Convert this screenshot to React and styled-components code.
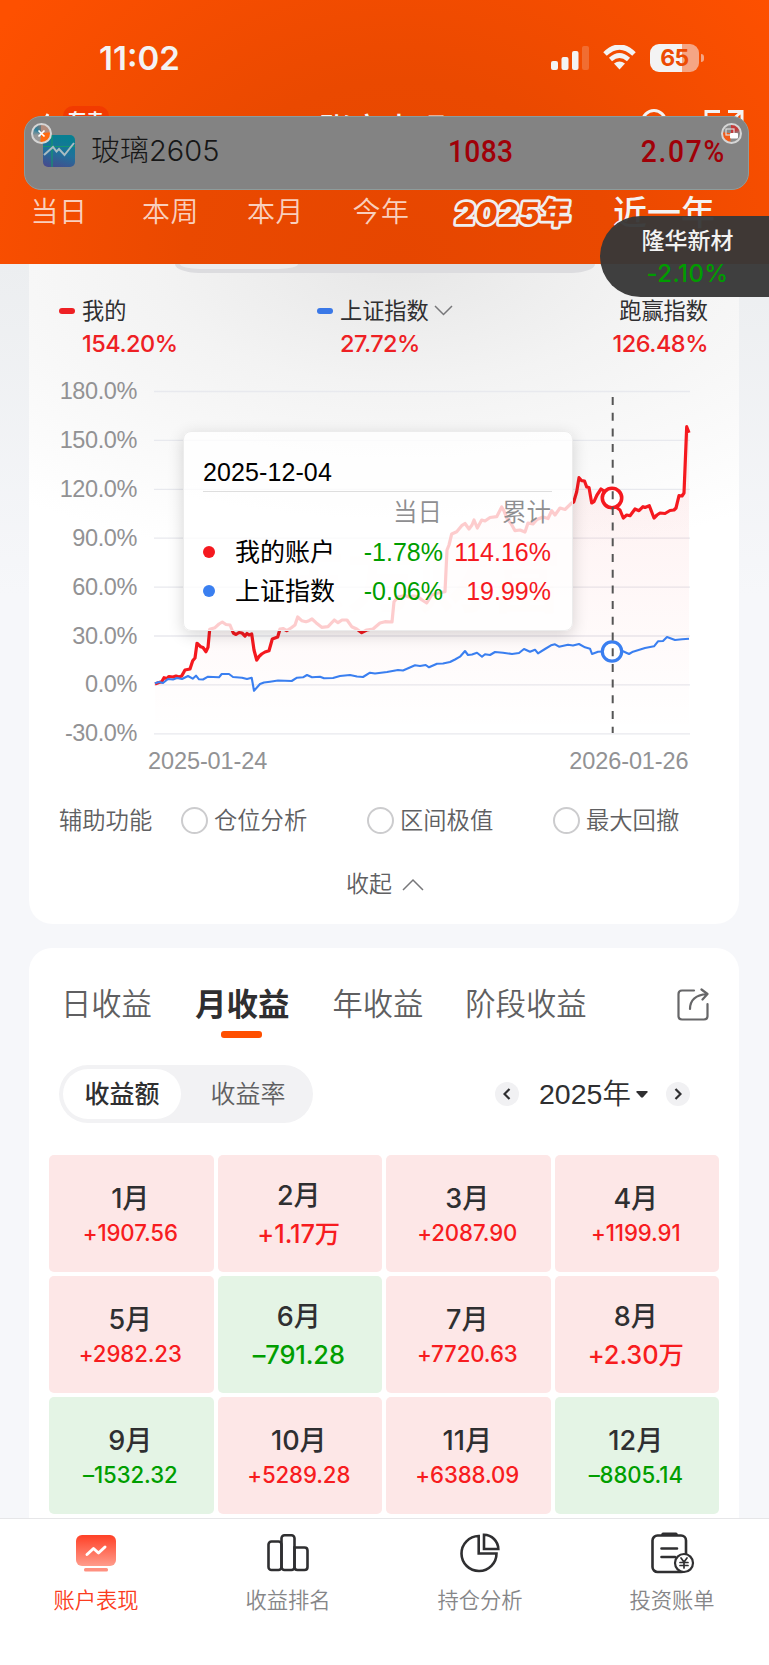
import React, { useState } from "react"
import styled, { createGlobalStyle } from "styled-components"

const GlobalStyle = createGlobalStyle`
    * {
        box-sizing: border-box;
    }
    body {
        margin: 0;
        background: #f6f7fa;
        font-family: Inter, "Noto Sans CJK SC", sans-serif;
        color: #2f2f31;
    }
    button {
        font: inherit;
        color: inherit;
        border: 0;
        padding: 0;
        background: none;
    }
    svg {
        display: block;
    }
`

const Page = styled.div`
    position: relative;
    width: 769px;
    height: 1665px;
    display: flex;
    flex-direction: column;
    overflow: hidden;
`

/* ---------- header ---------- */

const Header = styled.header`
    position: relative;
    flex: none;
    height: 264px;
    overflow: hidden;
    background: radial-gradient(ellipse 390px 330px at 400px 262px, #e64600 0%, #ea4900 55%, #fe5000 125%);
    color: #f3f3f3;
`

const StatusBar = styled.div`
    height: 106px;
    padding: 40px 70px 0 99px;
    display: flex;
    justify-content: space-between;
`

const Time = styled.div`
    font-size: 33px;
    line-height: 36px;
    font-weight: 600;
`

const StatusIcons = styled.div`
    display: flex;
    height: 35px;
    align-items: center;
    gap: 14px;
`

const Battery = styled.div`
    position: relative;
    width: 49px;
    height: 28px;
    border-radius: 9px;
    background: linear-gradient(90deg, #f3f3f3 66%, #f5a584 66%);
    color: #ec4b02;
    font-size: 23px;
    line-height: 28px;
    font-weight: 700;
    text-align: center;
    letter-spacing: -.5px;
    &::after {
        content: "";
        position: absolute;
        right: -5px;
        top: 10px;
        width: 3px;
        height: 8px;
        border-radius: 0 4px 4px 0;
        background: #f5a584;
    }
`

const TitleBar = styled.div`
    height: 80px;
    display: grid;
    grid-template-columns: 120px 1fr 120px;
    padding: 0 25px 0 40px;
    justify-items: center;
`

const TitleLeft = styled.div`
    display: flex;
    gap: 13px;
    justify-self: start;
    svg {
        margin-top: 7px;
    }
`

const HotTag = styled.span`
    height: 26px;
    padding: 0 5px;
    border-radius: 10px;
    background: #f23a00;
    font-size: 18px;
    line-height: 30px;
    font-weight: 700;
`

const Title = styled.h1`
    margin: 4px 18px 0 0;
    font-size: 32px;
    line-height: 40px;
    font-weight: 500;
`

const TitleRight = styled.div`
    display: flex;
    gap: 33px;
    justify-self: end;
    svg {
        margin-top: 3px;
    }
`

const RangeTabs = styled.nav`
    height: 78px;
    margin-top: 5px;
    display: flex;
    padding-left: 3px;
`

const RangeTab = styled.button`
    flex: none;
    width: ${p => p.$width}px;
    height: 42px;
    font-size: ${p => p.$large ? 34 : 28}px;
    line-height: ${p => p.$large ? 29 : 43}px;
    letter-spacing: ${p => p.$large ? 0 : 0.6}px;
    font-weight: ${p => p.$large ? 500 : 350};
    color: ${p => p.$large ? "#f3f3f3" : "#f9cfbd"};
    text-align: center;
`

/* ---------- floating quotes ---------- */

const QuoteBar = styled.div`
    position: absolute;
    left: 24px;
    top: 116px;
    width: 725px;
    height: 74px;
    padding: 0 24px 5px 18px;
    border: 1px solid #8d9c9c;
    border-radius: 17px;
    background: #838383;
    display: grid;
    grid-template-columns: 48px 1fr 74px 211px;
    align-items: center;
`

const QuoteName = styled.span`
    font-size: 29px;
    line-height: 40px;
    font-weight: 300;
    color: #171717;
    white-space: nowrap;
`

const QuoteNumber = styled.span`
    justify-self: end;
    font-family: Roboto, sans-serif;
    font-size: 32px;
    line-height: 40px;
    font-weight: 500;
    letter-spacing: ${p => p.$spacing}px;
    margin-right: -${p => p.$spacing}px;
    white-space: nowrap;
    transform: scaleX(.88);
    transform-origin: right;
    color: #a00008;
`

const Knob = styled.span`
    position: absolute;
    top: 6px;
    ${p => p.$side}: 6px;
    width: 21px;
    height: 21px;
    border: 2px solid #d5d5d5;
    border-radius: 50%;
    background: ${p => p.$side === "left"
        ? "conic-gradient(#b28c7d 0 20%, #ff6a10 25% 50%, #999 55% 70%, #2b7f9c 85%, #777 100%)"
        : "conic-gradient(#c23a3a 0 15%, #8a8a8a 25% 50%, #f25a17 55% 75%, #888 80% 100%)"};
`

const StockPill = styled.div`
    position: absolute;
    right: 0;
    top: 216px;
    width: 169px;
    height: 81px;
    padding: 9px 0 0 6px;
    border-radius: 41px 0 0 41px;
    background: rgba(55, 55, 55, .96);
    text-align: center;
    font-size: 23px;
    line-height: 33px;
    color: #f3f3f3;
    font-weight: 500;
`

const PillChange = styled.div`
    font-size: 24px;
    line-height: 32px;
    letter-spacing: .4px;
    font-weight: 500;
    color: #009c00;
`

/* ---------- cards ---------- */

const Content = styled.main`
    flex: 1;
    min-height: 0;
    overflow: hidden;
    padding: 0 30px 0 29px;
    background: linear-gradient(180deg, #eceef0 0, #f6f7fa 330px);
    display: flex;
    flex-direction: column;
    gap: 24px;
`

const Card = styled.section`
    flex: none;
    width: 710px;
    border-radius: 23px;
    background: #fff;
`

const ChartCard = styled(Card)`
    position: relative;
    height: 660px;
    border-radius: 0 0 23px 23px;
    background: radial-gradient(ellipse 620px 300px at 370px 0, #e7e7e7 0, #f3f3f3 40%, #fff 100%) #fff;
`

const ScopeTail = styled.div`
    width: 420px;
    height: 9px;
    margin-left: 146px;
    padding-left: 5px;
    border-radius: 0 0 24px 24px / 0 0 9px 9px;
    background: #dcdcdf;
    &::after {
        content: "";
        display: block;
        width: 118px;
        height: 5px;
        border-radius: 0 0 20px 20px / 0 0 5px 5px;
        background: #ececed;
    }
`

const Legend = styled.div`
    height: 98px;
    padding: 20px 31px 0 30px;
    display: grid;
    grid-template-columns: 258px 1fr auto;
`

const LegendItem = styled.div`
    padding-left: ${p => p.$color ? 23 : 0}px;
    text-align: ${p => p.$color ? "left" : "right"};
`

const LegendName = styled.div`
    position: relative;
    display: flex;
    align-items: center;
    justify-content: ${p => p.$color ? "flex-start" : "flex-end"};
    gap: 5px;
    font-size: 22.2px;
    line-height: 35px;
    &::before {
        content: "";
        display: ${p => p.$color ? "block" : "none"};
        width: 16px;
        height: 6px;
        margin: 1px 2px 0 -23px;
        border-radius: 3px;
        background: ${p => p.$color};
    }
`

const LegendValue = styled.div`
    font-size: 23.5px;
    line-height: 32px;
    letter-spacing: -.5px;
    font-weight: 450;
    color: #ee2024;
`

const Tooltip = styled.div`
    position: absolute;
    left: 154px;
    top: 167px;
    width: 390px;
    height: 200px;
    padding: 20px 20px 0 19px;
    border: 1px solid #ececec;
    border-radius: 8px;
    background: rgba(255, 255, 255, .78);
    box-shadow: 0 4px 16px rgba(0, 0, 0, .16);
    font-family: "Liberation Sans", "Noto Sans CJK SC", sans-serif;
    font-size: 25px;
    color: #000;
`

const TooltipDate = styled.div`
    height: 40px;
    line-height: 41px;
    letter-spacing: .1px;
    border-bottom: 1px solid #dedede;
`

const TooltipRow = styled.div`
    display: grid;
    grid-template-columns: 31px 102px 107px 108px;
    align-items: center;
    line-height: ${p => p.$head ? 42 : 37}px;
    height: ${p => p.$head ? 41 : 39}px;
    color: ${p => p.$head ? "#8e8e90" : "inherit"};
    font-weight: ${p => p.$head ? 350 : 400};
    font-size: ${p => p.$head ? 24.5 : 25}px;
`

const Dot = styled.i`
    width: 12px;
    height: 12px;
    margin-top: -2px;
    border-radius: 50%;
    background: ${p => p.$color};
`

const TooltipLabel = styled.span`
    padding-left: 1px;
    white-space: nowrap;
`

const TooltipValue = styled.span`
    text-align: right;
    white-space: nowrap;
    color: ${p => p.$up ? "#f5191f" : "#009e00"};
`

const TooltipHead = styled.span`
    text-align: right;
    padding-right: ${p => p.$pad || 0}px;
`

const Helpers = styled.div`
    height: 45px;
    margin-top: 23px;
    padding: 0 30px;
    display: flex;
    align-items: center;
    font-size: 23.3px;
    line-height: 34px;
    font-weight: 350;
    color: #606062;
`

const HelpersTitle = styled.span`
    flex: none;
    width: 123px;
`

const Radio = styled.label`
    flex: none;
    width: 186px;
    display: flex;
    align-items: center;
    gap: 8px;
    margin-left: -1px;
    margin-right: 1px;
    white-space: nowrap;
    &::before {
        content: "";
        flex: none;
        width: 23px;
        height: 23px;
        margin-right: -2px;
        border: 2px solid #ccccce;
        border-radius: 50%;
    }
`

const Collapse = styled.button`
    display: flex;
    align-items: center;
    gap: 10px;
    margin: 23px auto 0;
    padding-left: 2px;
    height: 36px;
    font-size: 23px;
    line-height: 34px;
    font-weight: 350;
    color: #606062;
`

const ProfitCard = styled(Card)`
    height: 700px;
`

const ProfitTabs = styled.div`
    height: 95px;
    padding: 34px 30px 0 32px;
    display: flex;
`

const ProfitTab = styled.button`
    position: relative;
    flex: none;
    height: 61px;
    margin-right: ${p => p.$gap}px;
    font-size: ${p => p.$active ? 31.5 : 30.3}px;
    line-height: 45px;
    display: flex;
    font-weight: ${p => p.$active ? 700 : 350};
    color: ${p => p.$active ? "#2f2f31" : "#5f5f61"};
    &::after {
        content: "";
        display: ${p => p.$active ? "block" : "none"};
        position: absolute;
        left: 50%;
        top: 49px;
        width: 41px;
        height: 7px;
        margin-left: -21px;
        border-radius: 3px;
        background: #ff4f00;
    }
`

const ShareButton = styled.button`
    margin: 6px 0 0 auto;
    align-self: flex-start;
`

const Filters = styled.div`
    height: 112px;
    padding: 22px 49px 0 30px;
    display: flex;
    justify-content: space-between;
`

const Segmented = styled.div`
    width: 254px;
    height: 58px;
    padding: 4px;
    display: flex;
    border-radius: 29px;
    background: #f2f2f4;
`

const Segment = styled.button`
    flex: none;
    width: ${p => p.$active ? 118 : 134}px;
    height: 50px;
    border-radius: 25px;
    font-size: 25px;
    line-height: 51px;
    background: ${p => p.$active ? "#fff" : "none"};
    font-weight: ${p => p.$active ? 500 : 350};
    color: ${p => p.$active ? "#2f2f31" : "#5f5f61"};
`

const YearPicker = styled.div`
    display: flex;
    align-items: center;
    height: 58px;
    font-family: "Liberation Sans", "Noto Sans CJK SC", sans-serif;
    font-size: 28.5px;
`

const RoundButton = styled.button`
    display: grid;
    place-items: center;
    width: 24px;
    height: 24px;
    border-radius: 50%;
    background: #f1f1f3;
`

const Year = styled.button`
    display: flex;
    align-items: center;
    gap: 5px;
    width: 109px;
    margin: 0 18px 0 20px;
    font-weight: 350;
    line-height: 40px;
    white-space: nowrap;
`

const Months = styled.div`
    padding: 0 20px;
    display: grid;
    grid-template-columns: repeat(4, 1fr);
    grid-auto-rows: 117px;
    gap: 4px;
`

const Month = styled.div`
    border-radius: 5px;
    padding: ${p => p.$big ? 23 : 26}px 2px 0 0;
    text-align: center;
    background: ${p => p.$down ? "#e4f4e5" : "#fde7e7"};
    color: ${p => p.$down ? "#009e00" : "#f71c20"};
`

const MonthName = styled.div`
    font-size: 27px;
    line-height: 36px;
    font-weight: 500;
    color: #2f2f31;
`

const MonthValue = styled.div`
    font-size: ${p => p.$big ? 25.4 : 22.2}px;
    line-height: ${p => p.$big ? 40 : 32}px;
    font-weight: ${p => p.$big ? 500 : 450};
    letter-spacing: -.1px;
`

/* ---------- bottom bar ---------- */

const BottomBar = styled.nav`
    flex: none;
    height: 147px;
    border-top: 1px solid #e6e6e8;
    background: #fff;
    display: grid;
    grid-template-columns: repeat(4, 1fr);
    padding-right: 1px;
`

const BottomItem = styled.button`
    display: flex;
    flex-direction: column;
    align-items: center;
    gap: 9px;
    padding-top: 14px;
    font-size: 21.3px;
    line-height: 36px;
    font-weight: 350;
    color: ${p => p.$active ? "#fb3c20" : "#868688"};
`

const redLine = "155,684 159,682.5 161.7,681.7 164,677.7 167,678.5 169,676.5 173,677 176,676 179,677 181.7,676 185,670 190,669 192.7,660.7 195,658 197,643.3 200.7,646.7 203,647.5 206,651.7 208,647.3 209.7,629.3 215,627.7 219,624 222.3,622 226,624.5 230,625 233.3,633 236,634.5 239,632.5 242,633 245,636 247,633.5 249,635 251.7,634 254,650 256.7,660 259,656.5 261.7,654 265,652 269,650.7 272.3,639 277.7,637 280,629 283,628.5 286.7,630.7 291,628 295,625 297.7,617 301.7,620.7 306,621.7 309,620.7 312,619 316,622.7 321.7,627.3 328,626.7 334.3,620 338,622.7 342,620 347,620 351.7,626.7 356.7,629 361.7,632.7 366.7,630 373,629 380,623 385,621.7 392,622 394,601.7 398,597 405,595.5 409,597 413,596 418,596.7 422,600 426.7,603 431.7,595 438,593 445,591.7 447,550 449,545 451.7,534 456.7,531.7 461.7,525.7 465,523.5 469,529 472,525 474,520 477.3,528 481.7,520 485,521 490,517.5 496.7,516.7 501.7,507 504,511 506.7,518 511,523.5 515,530.7 520,530 525,532 528,523 533,524 537,519.5 543,517 548,518.5 551.7,510.7 555,515 560,508 565,509.5 571.7,503 573.7,502 576.7,491.7 579,477.7 581.7,480.7 584.5,481 586.7,487 589,487.5 591.7,503 594,501.7 597,495 601,489 604,491 608,494 612.3,498 617.3,508 620,510 623.3,518 626.7,515 630,515.7 635,509 639,510.7 643,506.7 645,507.5 649.3,505.7 654,518 657,515 660,513 665,513.5 670,510.5 674,510 676,508 679,495.7 682,496 684,493 686.7,426.7 689,432.7"

const blueLine = "155,683.3 159,682 163,683 168,679 173,679.5 177,678 182,679 188,676 192.7,678.7 196,675.7 199,679.3 203,679.5 208,676.7 213,677 219,677.3 221.7,674 229,674 233,677 242,677.7 247,679 251.7,677.7 254,690.7 260,684 264,682.5 270,681.7 278,680.5 291.7,681 297,677.7 303,677.3 307,675 312,677.3 320,676.7 324,678.3 333,678 340,676 350,675 357,676.5 363,677 370,672.7 375,673.5 387,672 398,670 403,670.5 415,665.3 420,666 425.7,665 429,667.3 437,663.7 443,663.5 450,662 455,659.5 460,656.7 465,651 468,655 472,654.5 477,652.7 482,656.7 485,654.3 490,655 495,652 503,652.7 512,654 519,653 524,649 530,651.7 535,649.7 538,653.3 545,649 551,645.3 555,644.3 559,646.7 568,644.7 573,645.5 579,644 585,647.3 590,648.7 592,654 598,651.7 612,651 623,651.3 629,654 633,651.7 645,648 654,646.3 658,641.3 663,641 667,637 675,640 682,639.3 689,638.7"

const axis = ["180.0%", "150.0%", "120.0%", "90.0%", "60.0%", "30.0%", "0.0%", "-30.0%"]

const ranges = [
    { name: "当日", width: 112 },
    { name: "本周", width: 111 },
    { name: "本月", width: 99 },
    { name: "今年", width: 112 },
    { name: "2025年", width: 154, badge: true },
    { name: "近一年", width: 146, large: true }
]

const months = [
    ["1月", "+1907.56"],
    ["2月", "+1.17万", true],
    ["3月", "+2087.90"],
    ["4月", "+1199.91"],
    ["5月", "+2982.23"],
    ["6月", "–791.28", true],
    ["7月", "+7720.63"],
    ["8月", "+2.30万", true],
    ["9月", "–1532.32"],
    ["10月", "+5289.28"],
    ["11月", "+6388.09"],
    ["12月", "–8805.14"]
]

const Chart = () => <svg width="710" height="404" viewBox="29 371 710 404">
    <defs>
        <linearGradient id="area" x1="0" y1="0" x2="0" y2="1">
            <stop offset="0" stopColor="#f5191f" stopOpacity=".07" />
            <stop offset="1" stopColor="#f5191f" stopOpacity="0" />
        </linearGradient>
    </defs>
    {axis.map((label, i) => <g key={label}>
        <line x1="154" x2="690" y1={391.5 + i * 48.9} y2={391.5 + i * 48.9} stroke="#e8e9ee" strokeWidth="1.3" />
        <text
            x="137"
            y={399 + i * 48.9}
            textAnchor="end"
            fontFamily="Liberation Sans, sans-serif"
            fontSize="23.5"
            letterSpacing="-.4"
            fill="#929294"
        >{label}</text>
    </g>)}
    <text x="274" y="606" fontSize="72" fontWeight="700" fill="#ff5000" opacity=".025">东方财富</text>
    <polygon points={`155,733 ${redLine} 689,733`} fill="url(#area)" />
    <polyline points={redLine} fill="none" stroke="#f5191f" strokeWidth="3.2" strokeLinejoin="round" />
    <polyline points={blueLine} fill="none" stroke="#3a7ff0" strokeWidth="2.1" strokeLinejoin="round" />
    <circle cx="612" cy="498" r="9.7" fill="#fff" stroke="#f5191f" strokeWidth="3.6" />
    <circle cx="612" cy="651.5" r="9.7" fill="#fff" stroke="#3a7ff0" strokeWidth="3.2" />
    <line x1="612.7" x2="612.7" y1="397" y2="733" stroke="#555" strokeWidth="2" strokeDasharray="8 7.7" />
    <g fontFamily="Liberation Sans, sans-serif" fontSize="23.5" letterSpacing="-.1" fill="#929294">
        <text x="148" y="768.5">2025-01-24</text>
        <text x="688.5" y="768.5" textAnchor="end">2026-01-26</text>
    </g>
</svg>

const YearBadge = () => <svg width="154" height="42" viewBox="0 0 154 42">
    <text
        x="0"
        y="33"
        transform="translate(79) skewX(-6)"
        textAnchor="middle"
        fontSize="30"
        fontWeight="900"
        letterSpacing="1.2"
        fill="#ea4900"
        stroke="#efefef"
        strokeWidth="5.4"
        strokeLinejoin="round"
        paintOrder="stroke"
    >2025年</text>
</svg>

const SignalIcon = () => <svg width="38" height="24" viewBox="0 0 38 24" fill="#f3f3f3">
    <rect x="0" y="15" width="7" height="9" rx="2" />
    <rect x="10.5" y="11" width="7" height="13" rx="2" />
    <rect x="21" y="5" width="6.5" height="19" rx="2" />
    <rect x="31" y="0" width="7" height="24" rx="2" opacity=".2" />
</svg>

const WifiIcon = () => <svg width="33" height="25" viewBox="0 0 33 25" fill="none" stroke="#f3f3f3">
    <path d="M2 9 Q16.5 -5 31 9" strokeWidth="5" />
    <path d="M7.5 14.5 Q16.5 6.5 25.5 14.5" strokeWidth="4.6" />
    <path d="M11 18.5 Q16.5 14.5 22 18.5 L16.5 24.5Z" fill="#f3f3f3" stroke="none" />
</svg>

const QuoteIcon = () => <svg width="32" height="32" viewBox="0 0 32 32">
    <defs>
        <linearGradient id="quote" x1="0" y1="1" x2=".3" y2="0">
            <stop offset="0" stopColor="#4a478c" />
            <stop offset=".55" stopColor="#20719b" />
            <stop offset="1" stopColor="#087f92" />
        </linearGradient>
    </defs>
    <rect width="32" height="32" rx="5" fill="url(#quote)" />
    <path d="M0 11.5H32M9 0V32" stroke="#15966f" strokeWidth="1.2" />
    <path d="M1 20 L10 12 L13.5 16.5 L16 14 L21.5 20 L31 8" fill="none" stroke="#a9bcc2" strokeWidth="2" />
</svg>

const AccountIcon = () => <svg width="40" height="40" viewBox="0 0 40 40">
    <defs>
        <linearGradient id="account" x1="0" y1="0" x2="0" y2="1">
            <stop offset="0" stopColor="#ff4026" />
            <stop offset="1" stopColor="#ff9c8c" />
        </linearGradient>
    </defs>
    <rect y="2" width="40" height="31" rx="6" fill="url(#account)" />
    <rect x="8" y="35" width="24" height="3.5" rx="1.5" fill="#ff9080" />
    <path d="M11 21.5 L17.5 15.5 L22.5 20 L29 14" fill="none" stroke="#fff" strokeWidth="3" strokeLinecap="round" strokeLinejoin="round" />
</svg>

const RankIcon = () => <svg width="42" height="40" viewBox="0 0 42 40" fill="none" stroke="#2f2f31" strokeWidth="2.6">
    <rect x="1.5" y="8.5" width="13" height="28.5" rx="3" />
    <rect x="14.5" y="2.2" width="13" height="34.8" rx="3" />
    <path d="M27.5 14.5 H37.5 Q40.5 14.5 40.5 17.5 V34 Q40.5 37 37.5 37 H30.5 Q27.5 37 27.5 34Z" />
</svg>

const PieIcon = () => <svg width="40" height="40" viewBox="0 0 40 40" fill="none" stroke="#2f2f31" strokeWidth="2.6">
    <path d="M18.7 3 A17.5 17.5 0 1 0 36.5 20.5 H18.7Z" />
    <path d="M24 1.8 A14.5 14.5 0 0 1 38.3 16 H24Z" />
</svg>

const BillIcon = () => <svg width="42" height="40" viewBox="0 0 42 40" overflow="visible" fill="none" stroke="#2f2f31" strokeWidth="2.6" strokeLinecap="round">
    <rect x="1.5" y="2.5" width="33.5" height="36.5" rx="5" />
    <path d="M12 1.2H25" strokeWidth="3.4" />
    <path d="M10.5 15.5H26M10.5 24H24" />
    <circle cx="33" cy="30" r="9" fill="#fff" strokeWidth="2.2" />
    <path d="M30 25 L33 29 L36 25 M33 29 V35 M29 29.5H37 M29 32.5H37" strokeWidth="1.7" />
</svg>

const bottomItems = [
    { name: "账户表现", icon: <AccountIcon /> },
    { name: "收益排名", icon: <RankIcon /> },
    { name: "持仓分析", icon: <PieIcon /> },
    { name: "投资账单", icon: <BillIcon /> }
]

const profitTabs = [
    { name: "日收益", gap: 43 },
    { name: "月收益", gap: 43 },
    { name: "年收益", gap: 42 },
    { name: "阶段收益", gap: 0 }
]

export default () => {
    const [tab, setTab] = useState("月收益")
    const [mode, setMode] = useState("收益额")
    const [page, setPage] = useState("账户表现")

    return <Page>
        <GlobalStyle />
        <Header>
            <StatusBar>
                <Time>11:02</Time>
                <StatusIcons>
                    <SignalIcon />
                    <WifiIcon />
                    <Battery>65</Battery>
                </StatusIcons>
            </StatusBar>
            <TitleBar>
                <TitleLeft>
                    <svg width="10" height="24" viewBox="0 0 10 24" fill="none" stroke="#f3f3f3" strokeWidth="3"><path d="M8 1 L2 12 L8 23" /></svg>
                    <HotTag>有卖</HotTag>
                </TitleLeft>
                <Title>账户表现</Title>
                <TitleRight>
                    <svg width="30" height="30" viewBox="0 0 30 30" fill="none" stroke="#f3f3f3" strokeWidth="3"><circle cx="13" cy="13" r="11.5" /><path d="M21 21 L29 29" /></svg>
                    <svg width="40" height="34" viewBox="0 0 40 34" fill="none" stroke="#f3f3f3" strokeWidth="3"><path d="M16 2.5H2V32H38V18M24 2.5H38V12M37 3 L22 17" /></svg>
                </TitleRight>
            </TitleBar>
            <RangeTabs>
                {ranges.map(item => item.badge
                    ? <YearBadge key={item.name} />
                    : <RangeTab key={item.name} $width={item.width} $large={item.large}>{item.name}</RangeTab>)}
            </RangeTabs>
            <QuoteBar>
                <QuoteIcon />
                <QuoteName>玻璃2605</QuoteName>
                <QuoteNumber $spacing={0.4}>1083</QuoteNumber>
                <QuoteNumber $spacing={2}>2.07%</QuoteNumber>
                <Knob $side="left">
                    <svg width="17" height="17" viewBox="0 0 17 17" stroke="#fff" strokeWidth="1.7"><path d="M5.5 5.5 L11.5 11.5 M11.5 5.5 L5.5 11.5" /></svg>
                </Knob>
                <Knob $side="right">
                    <svg width="17" height="17" viewBox="0 0 17 17"><rect x="3" y="4" width="8" height="6" fill="none" stroke="#ddd" strokeWidth="1.2" /><rect x="7" y="8" width="8" height="5.5" rx="1" fill="#fff" /></svg>
                </Knob>
            </QuoteBar>
        </Header>

        <Content>
            <ChartCard>
                <ScopeTail />
                <Legend>
                    <LegendItem $color="#ee2024">
                        <LegendName $color="#ee2024">我的</LegendName>
                        <LegendValue>154.20%</LegendValue>
                    </LegendItem>
                    <LegendItem $color="#3a78e7">
                        <LegendName $color="#3a78e7">
                            上证指数
                            <svg width="19" height="11" viewBox="0 0 19 11" fill="none" stroke="#77777a" strokeWidth="1.5"><path d="M1 1 L9.5 9.5 L18 1" /></svg>
                        </LegendName>
                        <LegendValue>27.72%</LegendValue>
                    </LegendItem>
                    <LegendItem>
                        <LegendName>跑赢指数</LegendName>
                        <LegendValue>126.48%</LegendValue>
                    </LegendItem>
                </Legend>
                <Chart />
                <Tooltip>
                    <TooltipDate>2025-12-04</TooltipDate>
                    <TooltipRow $head>
                        <span />
                        <span />
                        <TooltipHead $pad={1}>当日</TooltipHead>
                        <TooltipHead>累计</TooltipHead>
                    </TooltipRow>
                    <TooltipRow>
                        <Dot $color="#f5191f" />
                        <TooltipLabel>我的账户</TooltipLabel>
                        <TooltipValue>-1.78%</TooltipValue>
                        <TooltipValue $up>114.16%</TooltipValue>
                    </TooltipRow>
                    <TooltipRow>
                        <Dot $color="#3a7ff0" />
                        <TooltipLabel>上证指数</TooltipLabel>
                        <TooltipValue>-0.06%</TooltipValue>
                        <TooltipValue $up>19.99%</TooltipValue>
                    </TooltipRow>
                </Tooltip>
                <Helpers>
                    <HelpersTitle>辅助功能</HelpersTitle>
                    <Radio>仓位分析</Radio>
                    <Radio>区间极值</Radio>
                    <Radio>最大回撤</Radio>
                </Helpers>
                <Collapse>
                    收起
                    <svg width="22" height="13" viewBox="0 0 22 13" fill="none" stroke="#77777a" strokeWidth="1.5"><path d="M1 12 L11 2 L21 12" /></svg>
                </Collapse>
            </ChartCard>

            <ProfitCard>
                <ProfitTabs>
                    {profitTabs.map(item => <ProfitTab
                        key={item.name}
                        $gap={item.gap}
                        $active={tab === item.name}
                        onClick={() => setTab(item.name)}
                    >{item.name}</ProfitTab>)}
                    <ShareButton>
                        <svg width="32" height="33" viewBox="0 0 32 33" fill="none" stroke="#666668" strokeWidth="2.2" strokeLinecap="round" strokeLinejoin="round">
                            <path d="M17 2.5H5Q1.5 2.5 1.5 6V28Q1.5 31.5 5 31.5H27Q30.5 31.5 30.5 28V16" />
                            <path d="M13 21 Q13 7.5 30 6 M24.5 1.5 L30.5 6 L25.5 11.5" />
                        </svg>
                    </ShareButton>
                </ProfitTabs>
                <Filters>
                    <Segmented>
                        {["收益额", "收益率"].map(name => <Segment
                            key={name}
                            $active={mode === name}
                            onClick={() => setMode(name)}
                        >{name}</Segment>)}
                    </Segmented>
                    <YearPicker>
                        <RoundButton>
                            <svg width="8" height="12" viewBox="0 0 8 12" fill="none" stroke="#2f2f31" strokeWidth="2.2"><path d="M6.5 1 L1.5 6 L6.5 11" /></svg>
                        </RoundButton>
                        <Year>
                            2025年
                            <svg width="12" height="7" viewBox="0 0 12 7" fill="#2f2f31"><path d="M1 0H11Q12 .5 11.5 1.2L7 6.3Q6 7.2 5 6.3L.5 1.2Q0 .5 1 0Z" /></svg>
                        </Year>
                        <RoundButton>
                            <svg width="8" height="12" viewBox="0 0 8 12" fill="none" stroke="#2f2f31" strokeWidth="2.2"><path d="M1.5 1 L6.5 6 L1.5 11" /></svg>
                        </RoundButton>
                    </YearPicker>
                </Filters>
                <Months>
                    {months.map(([name, value, big]) => <Month key={name} $big={big} $down={value[0] === "–"}>
                        <MonthName>{name}</MonthName>
                        <MonthValue $big={big}>{value}</MonthValue>
                    </Month>)}
                </Months>
            </ProfitCard>
        </Content>

        <BottomBar>
            {bottomItems.map(item => <BottomItem
                key={item.name}
                $active={page === item.name}
                onClick={() => setPage(item.name)}
            >
                {item.icon}
                {item.name}
            </BottomItem>)}
        </BottomBar>

        <StockPill>
            隆华新材
            <PillChange>-2.10%</PillChange>
        </StockPill>
    </Page>
}
